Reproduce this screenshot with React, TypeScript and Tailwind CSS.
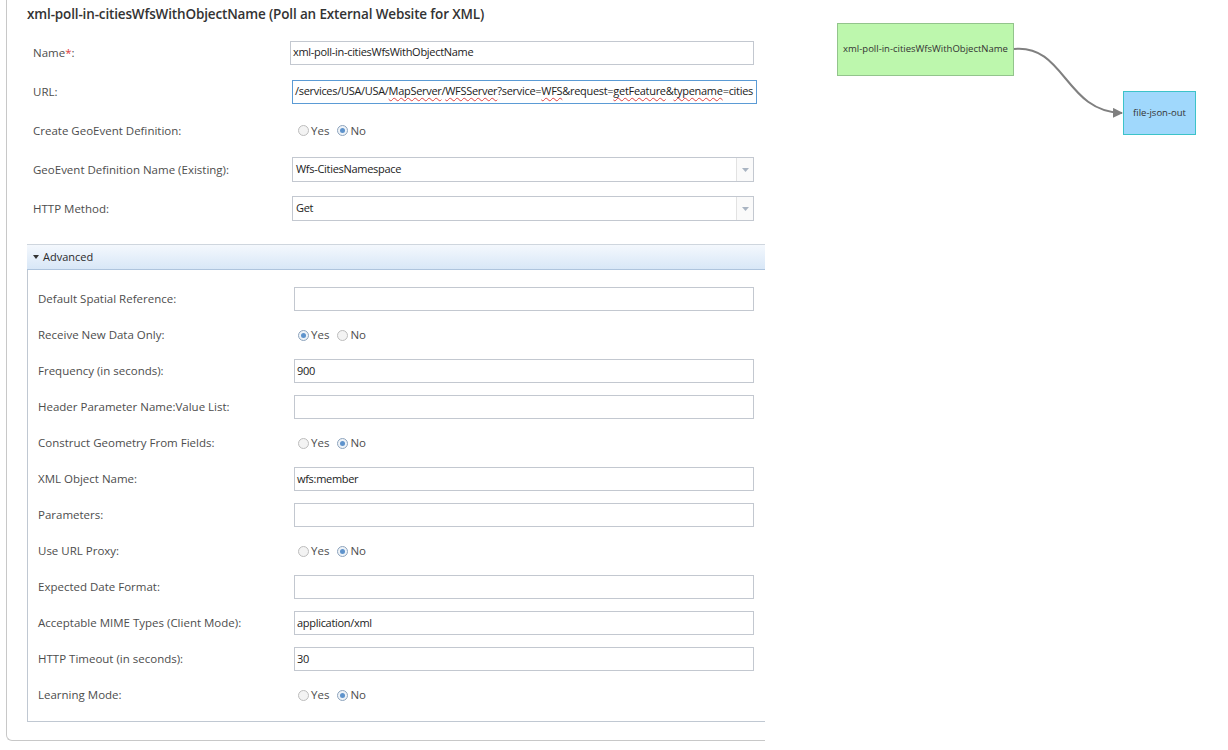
import React from "react";

const LABEL = "text-[11.5px] text-[#4d4d4d]";
const VALUE = "text-[11px] text-[#222] tracking-[-0.3px]";

function Radio({ checked }: { checked: boolean }) {
  return checked ? (
    <span className="inline-flex items-center justify-center w-[11px] h-[11px] rounded-full border border-[#8ea4bd] bg-[#eef3f8]">
      <span className="block w-[5px] h-[5px] rounded-full bg-[#5e93cc]" />
    </span>
  ) : (
    <span className="inline-block w-[11px] h-[11px] rounded-full border border-[#bdbdbd] bg-[#f3f3f3]" />
  );
}

function YesNo({ yes }: { yes: boolean }) {
  return (
    <div className={`flex items-center ${LABEL}`}>
      <Radio checked={yes} />
      <span className="ml-[2px]">Yes</span>
      <span className="ml-[8px]" />
      <Radio checked={!yes} />
      <span className="ml-[2px]">No</span>
    </div>
  );
}

function TextBox({
  children,
  focused,
  w,
  end,
}: {
  children?: React.ReactNode;
  focused?: boolean;
  w: string;
  end?: boolean;
}) {
  return (
    <div
      className={`h-[24px] ${w} flex items-center ${end ? "justify-end pr-[3px]" : "px-[2px]"} bg-white border ${
        focused ? "border-[#5b9bd5]" : "border-[#c3c8d0]"
      } overflow-hidden whitespace-nowrap ${VALUE}`}
    >
      <span className="shrink-0">{children}</span>
    </div>
  );
}

function Select({ value }: { value: string }) {
  return (
    <div className={`h-[25px] w-[462px] flex items-stretch bg-white border border-[#c3c8d0] ${VALUE}`}>
      <div className="flex-1 flex items-center pl-[3px]">{value}</div>
      <div className="w-[17px] border-l border-[#e2e2e2] bg-[#fafafa] flex items-center justify-center">
        <svg width="7" height="4" viewBox="0 0 7 4">
          <path d="M0 0 L7 0 L3.5 4 Z" fill="#a9b4c2" />
        </svg>
      </div>
    </div>
  );
}

function UrlText() {
  const sq = "underline decoration-wavy decoration-[#e04040] decoration-[1px] underline-offset-[2px]";
  return (
    <>
      /services/USA/USA/<span className={sq}>MapServer</span>/<span className={sq}>WFSServer</span>?service=
      <span className={sq}>WFS</span>&amp;request=<span className={sq}>getFeature</span>&amp;
      <span className={sq}>typename</span>=cities
    </>
  );
}

type AdvRow =
  | { label: string; kind: "text"; value?: string }
  | { label: string; kind: "radio"; yes: boolean };

const advanced: AdvRow[] = [
  { label: "Default Spatial Reference:", kind: "text" },
  { label: "Receive New Data Only:", kind: "radio", yes: true },
  { label: "Frequency (in seconds):", kind: "text", value: "900" },
  { label: "Header Parameter Name:Value List:", kind: "text" },
  { label: "Construct Geometry From Fields:", kind: "radio", yes: false },
  { label: "XML Object Name:", kind: "text", value: "wfs:member" },
  { label: "Parameters:", kind: "text" },
  { label: "Use URL Proxy:", kind: "radio", yes: false },
  { label: "Expected Date Format:", kind: "text" },
  { label: "Acceptable MIME Types (Client Mode):", kind: "text", value: "application/xml" },
  { label: "HTTP Timeout (in seconds):", kind: "text", value: "30" },
  { label: "Learning Mode:", kind: "radio", yes: false },
];

export default function App() {
  return (
    <div className="w-[1228px] h-[750px] bg-white flex overflow-hidden font-['Open_Sans','Noto_Sans',sans-serif]">
      {/* properties panel */}
      <div className="ml-[6px] w-[759px] h-[741px] border-l border-b border-[#c8c8c8] rounded-bl-[6px] flex flex-col">
        <div className="pl-[20px] pt-[5px] h-[23px] text-[13.5px] leading-[18px] font-semibold text-[#333] tracking-[-0.15px] whitespace-nowrap">
          xml-poll-in-citiesWfsWithObjectName (Poll an External Website for XML)
        </div>

        <div className="mt-[10px] pl-[26px] flex flex-col">
          <div className="h-[39px] flex items-center">
            <div className={`w-[257px] ${LABEL}`}>
              Name<span className="text-[#e03c3c]">*</span>:
            </div>
            <TextBox w="w-[464px]">xml-poll-in-citiesWfsWithObjectName</TextBox>
          </div>
          <div className="h-[39px] flex items-center">
            <div className={`w-[259px] ${LABEL}`}>URL:</div>
            <TextBox w="w-[465px]" focused end>
              <UrlText />
            </TextBox>
          </div>
          <div className="h-[39px] flex items-center">
            <div className={`w-[265px] ${LABEL}`}>Create GeoEvent Definition:</div>
            <YesNo yes={false} />
          </div>
          <div className="h-[39px] flex items-center">
            <div className={`w-[259px] ${LABEL}`}>GeoEvent Definition Name (Existing):</div>
            <Select value="Wfs-CitiesNamespace" />
          </div>
          <div className="h-[39px] flex items-center">
            <div className={`w-[259px] ${LABEL}`}>HTTP Method:</div>
            <Select value="Get" />
          </div>
        </div>

        {/* advanced section */}
        <div className="mt-[16px] ml-[20px]">
          <div className="h-[26px] border-t border-b border-t-[#cfd6de] border-b-[#aec4dd] bg-linear-to-b from-[#f4f8fd] to-[#d8e7f7] flex items-center pl-[6px] text-[11px] text-[#2a2a2a]">
            <svg width="6" height="4" viewBox="0 0 6 4" className="mr-[4px]">
              <path d="M0 0 L6 0 L3 4 Z" fill="#333" />
            </svg>
            Advanced
          </div>
          <div className="border-l border-b border-[#c0c8d2] pt-[11px] pb-[8px] pl-[10px]">
            {advanced.map((r) => (
              <div key={r.label} className="h-[36px] flex items-center">
                {r.kind === "text" ? (
                  <>
                    <div className={`w-[256px] ${LABEL}`}>{r.label}</div>
                    <TextBox w="w-[460px]">{r.value}</TextBox>
                  </>
                ) : (
                  <>
                    <div className={`w-[260px] ${LABEL}`}>{r.label}</div>
                    <YesNo yes={r.yes} />
                  </>
                )}
              </div>
            ))}
          </div>
        </div>
      </div>

      {/* flow diagram canvas */}
      <div className="relative flex-1">
        <svg className="absolute left-0 top-0" width="463" height="200">
          <defs>
            <marker id="arrow" viewBox="0 0 10 10" refX="9" refY="5" markerWidth="5" markerHeight="5" orient="auto">
              <path d="M0 0 L10 5 L0 10 Z" fill="#7f7f7f" />
            </marker>
          </defs>
          <path
            d="M249 49 C 300 44, 300 112, 357 113"
            fill="none"
            stroke="#808080"
            strokeWidth="2"
            markerEnd="url(#arrow)"
          />
        </svg>
        <div className="absolute left-[72px] top-[23px] w-[177px] h-[53px] bg-[#bdf7ad] border border-[#93c48c] flex items-center justify-center text-[9.5px] text-[#333] whitespace-nowrap">
          xml-poll-in-citiesWfsWithObjectName
        </div>
        <div className="absolute left-[358px] top-[91px] w-[73px] h-[44px] bg-[#a0d8fc] border border-[#3cc3c9] flex items-center justify-center text-[9.5px] text-[#333] whitespace-nowrap">
          file-json-out
        </div>
      </div>
    </div>
  );
}
